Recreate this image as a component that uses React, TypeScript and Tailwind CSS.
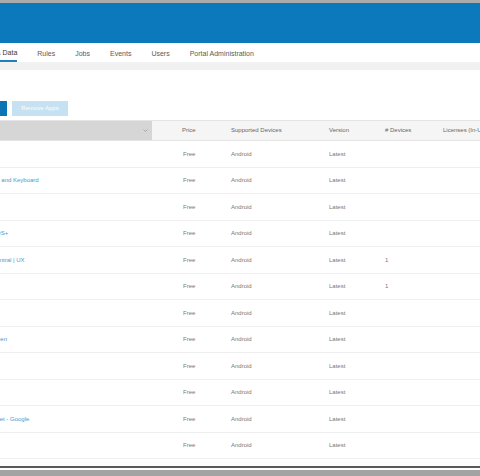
import React from "react";

const rows: { name: string; nameOffset: number; devices?: string }[] = [
  { name: "", nameOffset: 0 },
  { name: "ction and Keyboard", nameOffset: -13 },
  { name: "", nameOffset: 0 },
  { name: "Knox SDS+", nameOffset: -23 },
  { name: "Central | UX", nameOffset: -8, devices: "1" },
  { name: "", nameOffset: 0, devices: "1" },
  { name: "", nameOffset: 0 },
  { name: "Screen", nameOffset: -12 },
  { name: "", nameOffset: 0 },
  { name: "", nameOffset: 0 },
  { name: "Sheet - Google", nameOffset: -11 },
  { name: "", nameOffset: 0 },
];

const tabs = ["Rules", "Jobs", "Events", "Users", "Portal Administration"];

export default function App() {
  return (
    <div
      className="w-[480px] h-[476px] overflow-hidden bg-white flex flex-col"
      style={{ fontFamily: '"Liberation Sans", Arial, sans-serif' }}
    >
      <div className="h-[3px] bg-[#ababab] shrink-0" />
      <div className="h-[40px] bg-[#0b79bb] shrink-0" />
      {/* tabs */}
      <div className="h-[19px] shrink-0 flex items-stretch text-[7px] text-[#5a5a5a] bg-white">
        <div className="flex gap-[20px] ml-[-22px] items-stretch shrink-0">
          <div className="flex items-center border-b-2 border-[#1f7fbd] pt-[3px] text-[#3a3a3a] whitespace-nowrap">
            Apps &amp; Data
          </div>
          {tabs.map((t) => (
            <div key={t} className="flex items-center pt-[3px] whitespace-nowrap">
              {t}
            </div>
          ))}
        </div>
      </div>
      <div className="h-[8px] bg-[#f1f1f1] shrink-0" />
      <div className="h-[31px] shrink-0" />
      {/* buttons */}
      <div className="h-[15px] shrink-0 flex gap-[5px] ml-[-30px]">
        <div className="w-[37px] shrink-0 bg-[#0b74b5]" />
        <div className="w-[56px] shrink-0 bg-[#c6e1f1] text-white text-[6px] flex items-center justify-center">
          Remove Apps
        </div>
      </div>
      <div className="h-[4px] shrink-0" />
      {/* table header */}
      <div className="h-[21px] shrink-0 flex text-[6px] text-[#666] border-y border-[#e4e4e4]">
        <div className="w-[152px] shrink-0 bg-[#d6d6d6] flex items-center justify-end pr-[4px]">
          <svg width="5" height="3" viewBox="0 0 5 3">
            <path d="M0.5 0.5 L2.5 2.5 L4.5 0.5" fill="none" stroke="#9a9a9a" strokeWidth="0.8" />
          </svg>
        </div>
        <div className="flex-1 flex bg-[#f5f5f5] items-center overflow-hidden">
          <div className="w-[79px] shrink-0 pl-[30px]">Price</div>
          <div className="w-[98px] shrink-0">Supported Devices</div>
          <div className="w-[56px] shrink-0">Version</div>
          <div className="w-[58px] shrink-0">#&nbsp;Devices</div>
          <div className="whitespace-nowrap shrink-0">Licenses (In-Use)</div>
        </div>
      </div>
      {/* rows */}
      <div className="flex flex-col shrink-0">
        {rows.map((r, i) => (
          <div
            key={i}
            className="h-[26.5px] flex items-center text-[6px] text-[#777] border-b border-[#efefef] pt-[1px]"
          >
            <div className="w-[152px] shrink-0 overflow-hidden whitespace-nowrap">
              <span className="text-[#4b98cf] inline-block" style={{ marginLeft: r.nameOffset }}>
                {r.name}
              </span>
            </div>
            <div className="w-[79px] shrink-0 pl-[31px]">Free</div>
            <div className="w-[98px] shrink-0">Android</div>
            <div className="w-[56px] shrink-0">Latest</div>
            <div className="w-[58px] shrink-0">{r.devices ?? ""}</div>
            <div />
          </div>
        ))}
      </div>
      <div className="flex-1" />
      <div className="h-[1.5px] bg-[#5a5a5a] shrink-0" />
      <div className="h-[2.5px] bg-white shrink-0" />
      <div className="h-[6px] bg-[#a3a3a3] shrink-0" />
    </div>
  );
}
